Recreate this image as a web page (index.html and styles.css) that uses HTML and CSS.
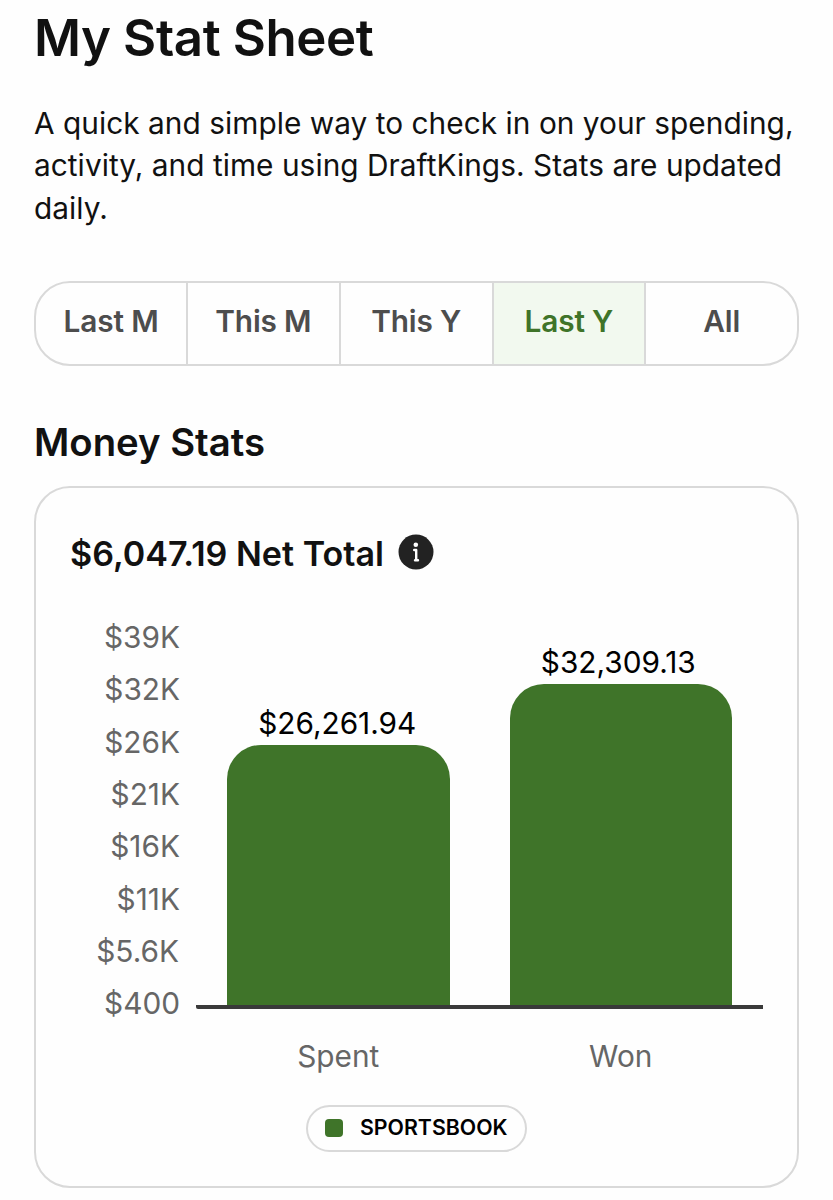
FILE: index.html
```html
<!DOCTYPE html>
<html lang="en">
<head>
    <meta charset="utf-8">
    <title>My Stat Sheet</title>
    <link rel="stylesheet" href="styles.css">
</head>
<body>
<h1>My Stat Sheet</h1>
<p class="intro">A quick and simple way to check in on your spending, activity, and time using DraftKings. Stats are updated daily.</p>

<div class="tabs">
    <button class="tab">Last M</button>
    <button class="tab">This M</button>
    <button class="tab">This Y</button>
    <button class="tab active">Last Y</button>
    <button class="tab">All</button>
</div>

<h2>Money Stats</h2>
<div class="card">
    <div class="total">
        <h3>$6,047.19 Net Total</h3>
        <svg class="info" viewBox="0 0 36 36">
            <circle cx="18" cy="18" r="17.5" fill="#222"/>
            <circle cx="17.8" cy="10.8" r="2.3" fill="#fff"/>
            <path d="M16.2 16h2v10.2h1.8M18 26.2h-1" fill="none" stroke="#fff" stroke-width="2.4" stroke-linecap="round" stroke-linejoin="round"/>
        </svg>
    </div>

    <div class="chart">
        <div class="axis">
            <span>$39K</span>
            <span>$32K</span>
            <span>$26K</span>
            <span>$21K</span>
            <span>$16K</span>
            <span>$11K</span>
            <span class="decimal">$5.6K</span>
            <span>$400</span>
        </div>
        <div class="plot">
            <div class="bars">
                <div class="col">
                    <span class="value">$26,261.94</span>
                    <div class="bar" style="height: 260.5px"></div>
                </div>
                <div class="col">
                    <span class="value won">$32,309.13</span>
                    <div class="bar" style="height: 321px"></div>
                </div>
            </div>
            <div class="names">
                <span>Spent</span>
                <span>Won</span>
            </div>
        </div>
    </div>

    <div class="legend">
        <span class="swatch"></span>
        <span class="legend-text">SPORTSBOOK</span>
    </div>
</div>
</body>
</html>
```
FILE: styles.css
```css
* {
    box-sizing: border-box;
}

body {
    margin: 0;
    padding: 8px 34px 0;
    background-color: #fefefe;
    color: #111;
    font-family: Inter, "Liberation Sans", sans-serif;
    font-optical-sizing: none;
    font-size: 29.8px;
}

h1, h2, h3, p {
    margin: 0;
}

h1 {
    font-size: 51px;
    line-height: 60px;
    font-weight: 600;
    letter-spacing: -0.4px;
}

.intro {
    margin-top: 33.6px;
    line-height: 42.7px;
    letter-spacing: 0.04px;
}

.tabs {
    display: flex;
    width: 765px;
    height: 85px;
    margin-top: 51.4px;
    border: 2px solid #d9d9d9;
    border-radius: 36px;
    overflow: hidden;
}

.tab {
    flex: 1;
    padding: 0 0 5px;
    border: none;
    border-left: 2px solid #d9d9d9;
    background: none;
    color: #4d4d4d;
    font: inherit;
    font-weight: 600;
    letter-spacing: -0.15px;
}

.tab:first-child {
    flex: 0 0 150px;
    border-left: none;
}

.tab.active {
    background-color: #f2f9ef;
    color: #3f7429;
}

h2 {
    margin-top: 53px;
    font-size: 38.3px;
    line-height: 46px;
    font-weight: 600;
}

.card {
    width: 765px;
    height: 702px;
    margin-top: 21px;
    padding: 45px 34px 0;
    border: 2px solid #d9d9d9;
    border-radius: 36px;
}

.total {
    display: flex;
    align-items: center;
    gap: 14px;
    height: 42px;
}

h3 {
    font-size: 34.1px;
    line-height: 42px;
    font-weight: 600;
}

.info {
    width: 36px;
    height: 36px;
    margin-bottom: 4px;
}

.chart {
    display: flex;
    gap: 16px;
    margin-top: 36px;
    color: #666;
}

.axis {
    display: flex;
    flex-direction: column;
    width: 110px;
    text-align: right;
    line-height: 52.3px;
}

.decimal {
    padding-right: 1px;
}

.plot {
    flex: 1;
}

.bars {
    display: flex;
    align-items: flex-end;
    gap: 60px;
    height: 398px;
    padding: 0 31px;
    border-bottom: 4px solid #3a3a3a;
    border-bottom-left-radius: 2px;
}

.col {
    flex: 1;
    text-align: center;
}

.value {
    display: block;
    margin-right: 2px;
    line-height: 43px;
    color: #000;
}

.value.won {
    margin-right: 5px;
}

.bar {
    background-color: #3f7429;
    border-radius: 34px 34px 0 0;
}

.names {
    display: flex;
    gap: 60px;
    margin-top: 29px;
    padding: 0 31px;
    line-height: 36px;
}

.names span {
    flex: 1;
    text-align: center;
}

.legend {
    display: flex;
    align-items: center;
    gap: 17px;
    width: 221px;
    height: 47px;
    margin: 30.6px auto 0;
    padding-left: 17px;
    border: 2px solid #d9d9d9;
    border-radius: 24px;
    color: #000;
}

.swatch {
    width: 18px;
    height: 18px;
    border-radius: 4px;
    background-color: #3f7429;
}

.legend-text {
    padding-bottom: 2px;
    font-size: 21.3px;
    line-height: 26px;
    font-weight: 600;
}
```
